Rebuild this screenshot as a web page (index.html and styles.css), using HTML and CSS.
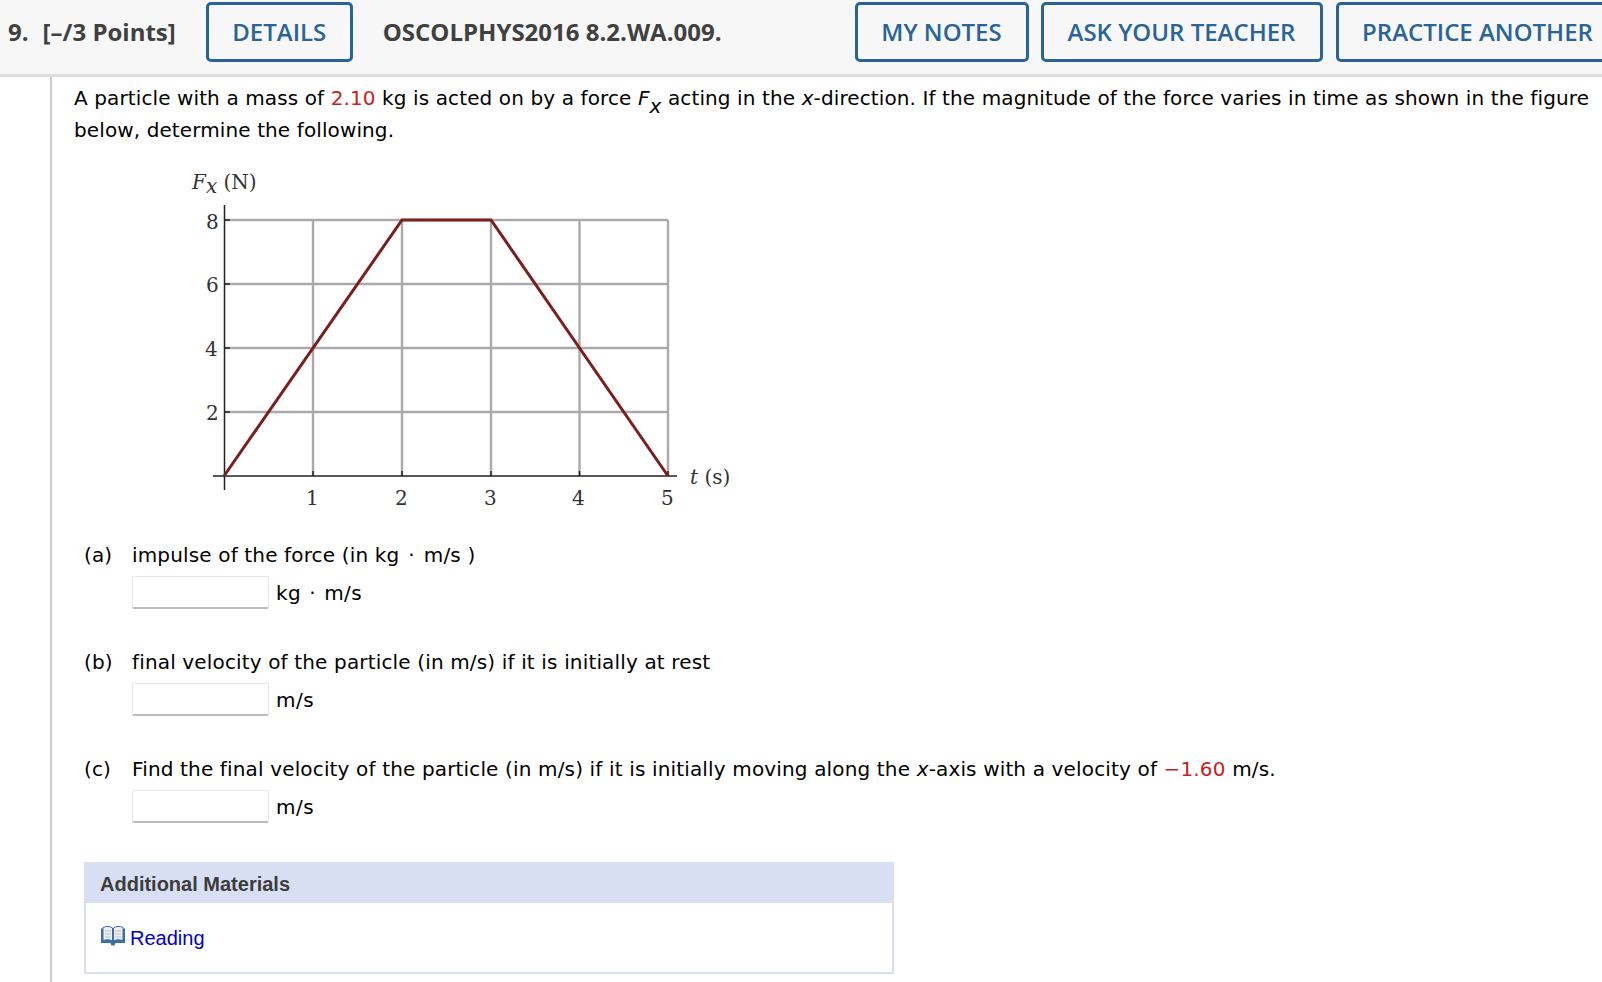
FILE: index.html
```html
<!DOCTYPE html>
<html lang="en">
<head>
<meta charset="UTF-8" />
<title>OSCOLPHYS2016 8.2.WA.009.</title>
<link rel="stylesheet" href="styles.css">
</head>
<body>
  <header class="qbar">
    <span class="qnum">9.</span>
    <span class="qpoints">[&ndash;/3 Points]</span>
    <a class="qbtn qbtn-details">DETAILS</a>
    <span class="qcode">OSCOLPHYS2016 8.2.WA.009.</span>
    <a class="qbtn qbtn-notes">MY NOTES</a>
    <a class="qbtn qbtn-ask">ASK YOUR TEACHER</a>
    <a class="qbtn qbtn-practice">PRACTICE ANOTHER</a>
  </header>

  <main class="question">
    <p class="intro">A particle with a mass of <span class="red">2.10</span> kg is acted on by a force <span class="fx"><i>F</i><sub>x</sub></span> acting in the <i>x</i>-direction. If the magnitude of the force varies in time as shown in the figure<br>below, determine the following.</p>

    <svg class="graph" width="560" height="350" viewBox="174 170 560 350">
      <g class="grid">
        <path d="M224 220H668M224 284H668M224 348H668M224 412H668" />
        <path d="M313 220V476M402 220V476M491 220V476M579.500 220V476M668 220V476" />
      </g>
      <path class="axis" d="M224.500 205V490M213 476H677" />
      <path class="axis" d="M224 220h6M224 284h6M224 348h6M224 412h6M313 476v-5M402 476v-5M491 476v-5M579.500 476v-5M668 476v-5" />
      <path class="curve" d="M224 476L402 220H491L668 476" />
      <text class="lbl" x="192" y="189"><tspan class="var">F</tspan><tspan class="var" dy="4">x</tspan><tspan dy="-4"> (N)</tspan></text>
      <text class="lbl" x="206" y="229">8</text>
      <text class="lbl" x="206" y="292">6</text>
      <text class="lbl" x="205" y="356">4</text>
      <text class="lbl" x="206" y="420">2</text>
      <text class="lbl" x="306" y="505">1</text>
      <text class="lbl" x="395" y="505">2</text>
      <text class="lbl" x="484" y="505">3</text>
      <text class="lbl" x="572" y="505">4</text>
      <text class="lbl" x="661" y="505">5</text>
      <text class="lbl" x="690" y="484"><tspan class="var">t</tspan> (s)</text>
    </svg>

    <section class="part">
      <span class="part-label">(a)</span>
      <div class="part-text">impulse of the force (in kg<span class="dot">&middot;</span>m/s )</div>
      <div class="answer"><input type="text" class="answer-box" /><span class="unit">kg<span class="dot">&middot;</span>m/s</span></div>
    </section>
    <section class="part">
      <span class="part-label">(b)</span>
      <div class="part-text">final velocity of the particle (in m/s) if it is initially at rest</div>
      <div class="answer"><input type="text" class="answer-box" /><span class="unit">m/s</span></div>
    </section>
    <section class="part">
      <span class="part-label">(c)</span>
      <div class="part-text">Find the final velocity of the particle (in m/s) if it is initially moving along the <i>x</i>-axis with a velocity of <span class="red">&minus;1.60</span> m/s.</div>
      <div class="answer"><input type="text" class="answer-box" /><span class="unit">m/s</span></div>
    </section>

    <section class="materials">
      <h2 class="materials-title">Additional Materials</h2>
      <div class="materials-body">
        <svg class="book" width="24" height="21" viewBox="0 0 24 21">
          <path d="M0 2.500H24V17H14.500L13.500 19.500H10.500L9.500 17H0Z" fill="#3a6ea5" />
          <path d="M2 1.500C5 0 9 0 11.500 2V15C9 13.500 5 13.500 2 14.500Z" fill="#eef0ee" stroke="#3a6ea5" stroke-width="1" />
          <path d="M22 1.500C19 0 15 0 12.500 2V15C15 13.500 19 13.500 22 14.500Z" fill="#eef0ee" stroke="#3a6ea5" stroke-width="1" />
          <path d="M4 5h6M4 8h6M4 11h6M14 5h6M14 8h6M14 11h6" stroke="#b9c0c6" stroke-width="1" fill="none" />
        </svg>
        <a class="reading">Reading</a>
      </div>
    </section>
  </main>
</body>
</html>
```
FILE: styles.css
```css
* {
  box-sizing: border-box;
}
html, body {
  margin: 0;
  padding: 0;
  height: 100%;
  overflow: hidden;
}
body {
  background: #fff;
  color: #000;
  font-family: "DejaVu Sans", Verdana, sans-serif;
  font-size: 20px;
  letter-spacing: 0.15px;
}

/* top bar */
.qbar {
  display: flex;
  align-items: center;
  height: 77px;
  padding: 2px 0 13px 8px;
  background: #f7f7f7;
  border-bottom: 3px solid #dedede;
  font-family: "Open Sans", sans-serif;
  font-weight: 600;
  font-size: 24px;
  letter-spacing: 0;
  color: #404040;
  white-space: nowrap;
  width: 1640px;
}
.qnum {
  margin-right: 14px;
  font-weight: 700;
}
.qpoints {
  margin-right: 30px;
  font-weight: 700;
}
.qcode {
  margin-left: 30px;
  margin-right: 133px;
  font-weight: 700;
}
.qbtn {
  display: flex;
  align-items: center;
  justify-content: center;
  height: 60px;
  border: 3px solid #2a6496;
  border-radius: 5px;
  color: #2a6496;
  flex: none;
}
.qbtn-details { width: 147px; }
.qbtn-notes { width: 174px; margin-right: 12px; }
.qbtn-ask { width: 282px; margin-right: 13px; }
.qbtn-practice { width: 284px; }

/* question */
.question {
  margin-left: 50px;
  padding: 5px 0 0 22px;
  border-left: 2px solid #ccc;
  height: 905px;
}
.intro {
  margin: 0;
  width: 1530px;
  line-height: 32px;
  letter-spacing: 0.11px;
}
.fx {
  white-space: nowrap;
}
.intro sub {
  font-style: italic;
  font-size: 20px;
  line-height: 0;
  vertical-align: -8px;
}
.red {
  color: #c8211a;
}
.dot {
  margin: 0 9px;
}
.unit .dot {
  margin: 0 8px;
}
.graph {
  display: block;
  margin: 24px 0 19px 100px;
}
.grid path {
  fill: none;
  stroke: #aaa;
  stroke-width: 2.4;
}
.axis {
  fill: none;
  stroke: #222;
  stroke-width: 1.5;
}
.curve {
  fill: none;
  stroke: #7a1f1c;
  stroke-width: 3;
}
.lbl {
  font-family: "DejaVu Serif", serif;
  font-size: 20px;
  letter-spacing: 0;
  fill: #333;
}
.var {
  font-style: italic;
}

.part {
  display: grid;
  grid-template-columns: 48px 1fr;
  grid-template-rows: 32px 33px;
  row-gap: 5px;
  height: 70px;
  margin: 0 0 37px 10px;
  line-height: 32px;
}
.part-label {
  grid-column: 1;
}
.part-text {
  grid-column: 2;
}
.answer {
  grid-column: 2;
  display: flex;
  align-items: center;
  gap: 7px;
}
.answer-box {
  width: 137px;
  height: 33px;
  padding: 0;
  border: 1px solid #e6e6e6;
  border-bottom: 2px solid #bdbdbd;
  border-radius: 2px;
  background: #fff;
}
.unit {
  letter-spacing: 0.5px;
}

/* additional materials */
.materials {
  width: 810px;
  height: 112px;
  margin: 39px 0 0 10px;
  border: 2px solid #d8dff3;
  border-top: 0;
  font-family: "Liberation Sans", Arial, sans-serif;
  font-size: 20px;
  letter-spacing: 0;
}
.materials-title {
  margin: 0;
  height: 41px;
  padding-left: 14px;
  background: #d8dff3;
  color: #3c3c3c;
  font-size: 20px;
  font-weight: 700;
  line-height: 45px;
}
.materials-body {
  display: flex;
  align-items: center;
  gap: 5px;
  padding: 23px 0 0 15px;
}
.reading {
  color: #0000cc;
}
.book {
  flex: none;
  margin-bottom: 3px;
}
```
